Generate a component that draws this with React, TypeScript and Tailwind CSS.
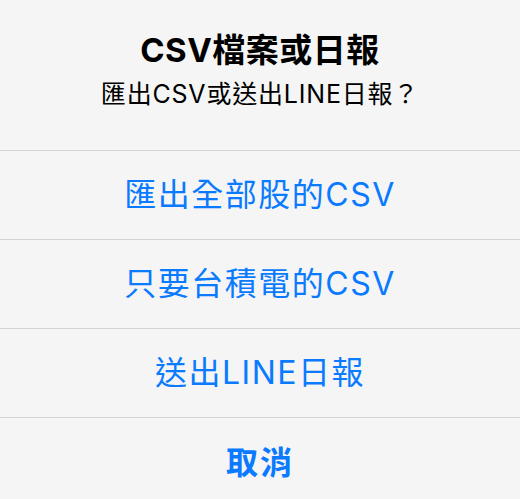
export default function App() {
  const actions = ["匯出全部股的CSV", "只要台積電的CSV", "送出LINE日報"];

  return (
    <div
      className="min-h-screen w-full bg-[#f5f5f5] overflow-hidden"
      style={{ fontFamily: 'Inter, "Noto Sans CJK TC", sans-serif' }}
    >
      {/* Header */}
      <div className="flex h-[151px] flex-col items-center border-b border-[#d4d4d4] pt-[31px]">
        <h1 className="text-[33px] font-bold leading-[38px] tracking-[0.5px] text-black">CSV檔案或日報</h1>
        <p className="mt-[10px] text-[25px] leading-[30px] tracking-[0.8px] text-black">匯出CSV或送出LINE日報？</p>
      </div>

      {/* Actions */}
      {actions.map((label) => (
        <button
          key={label}
          className="flex h-[89px] w-full items-center justify-center border-b border-[#d4d4d4] text-[32px] tracking-[1.5px] text-[#0a7aff]"
        >
          {label}
        </button>
      ))}
      <button className="flex h-[89px] w-full items-center justify-center text-[32px] font-semibold tracking-[2px] text-[#0a7aff]">
        取消
      </button>
    </div>
  );
}
